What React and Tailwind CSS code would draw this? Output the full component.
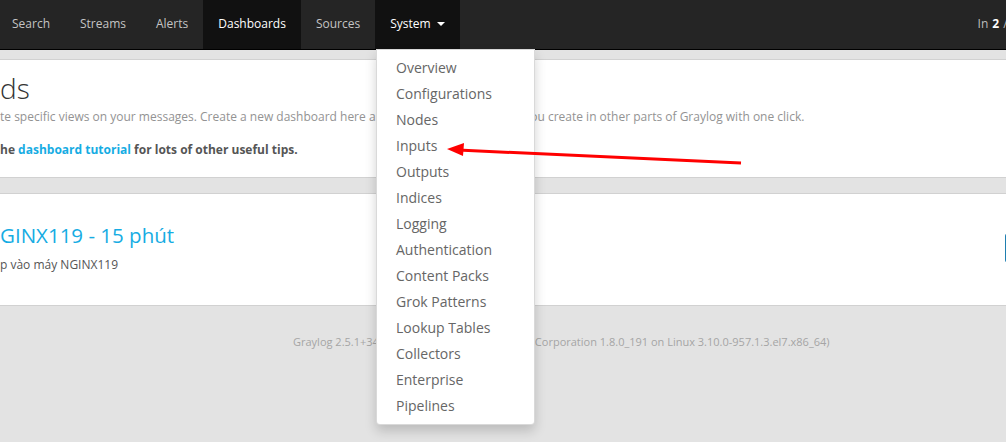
import React from "react";

const navItems = [
  { label: "Search" },
  { label: "Streams" },
  { label: "Alerts" },
  { label: "Dashboards", active: true },
  { label: "Sources" },
];

const systemMenu = [
  "Overview",
  "Configurations",
  "Nodes",
  "Inputs",
  "Outputs",
  "Indices",
  "Logging",
  "Authentication",
  "Content Packs",
  "Grok Patterns",
  "Lookup Tables",
  "Collectors",
  "Enterprise",
  "Pipelines",
];

function NavBar() {
  return (
    <nav className="h-[50px] shrink-0 bg-[#252525] border-b border-black flex items-stretch text-[12px] overflow-hidden">
      <div className="flex items-stretch ml-[-3px]">
        {navItems.map((item) => (
          <a
            key={item.label}
            className={`px-[15px] pb-[2px] flex items-center ${
              item.active ? "bg-[#111111] text-white" : "text-[#c4c4c4]"
            }`}
          >
            {item.label}
          </a>
        ))}
        <a className="px-[15px] pb-[2px] flex items-center bg-[#111111] text-white">
          System
          <span className="ml-[6px] w-0 h-0 border-x-[4px] border-x-transparent border-t-[4px] border-t-white" />
        </a>
      </div>
      <div className="ml-auto mr-[-74px] pb-[2px] shrink-0 flex items-center whitespace-nowrap text-[#bdbdbd]">
        In <b className="text-white mx-[4px]">2</b> / Out <b className="text-white mx-[4px]">2</b> msg/s
      </div>
    </nav>
  );
}

function SystemDropdown() {
  return (
    <ul className="absolute left-[376px] top-[49px] w-[159px] bg-white border border-black/15 rounded-b-[4px] shadow-[0_6px_12px_rgba(0,0,0,0.175)] pt-[5px] pb-[5px] text-[14px] text-[#666]">
      {systemMenu.map((label) => (
        <li key={label} className="px-[19px] h-[26px] leading-[26px] whitespace-nowrap">
          {label}
        </li>
      ))}
    </ul>
  );
}

function Arrow() {
  return (
    <svg className="absolute left-0 top-0 pointer-events-none" width="1006" height="442">
      <line x1="741" y1="163" x2="458" y2="150" stroke="#ff0000" strokeWidth="3" />
      <polygon points="447,149 464,143 463,156" fill="#ff0000" />
    </svg>
  );
}

export default function App() {
  return (
    <div className="relative w-[1006px] h-[442px] overflow-hidden bg-[#e3e3e3] font-['Open_Sans',sans-serif] flex flex-col">
      <NavBar />

      <div className="pt-[9px] flex flex-col gap-[15px]">
        <section className="bg-white border-y border-[#d1d1d1] h-[119px] pt-[11px] whitespace-nowrap">
          <h1 className="text-[28px] font-light text-[#333] leading-[34px]">ds</h1>
          <p className="mt-[3px] text-[12px] text-[#939393] leading-[18px]">
            te specific views on your messages. Create a new dashboard here and add any graph or chart you
            create in other parts of Graylog with one click.
          </p>
          <p className="mt-[15px] text-[12px] font-bold text-[#555] leading-[18px]">
            he <a className="text-[#16ace3]">dashboard tutorial</a> for lots of other useful tips.
          </p>
        </section>

        <section className="bg-white border-y border-[#d1d1d1] h-[113px] flex items-center whitespace-nowrap">
          <div className="flex-1 pb-[5px]">
            <h2 className="text-[20.5px] text-[#16ace3] leading-[28px]">GINX119 - 15 phút</h2>
            <p className="mt-[7px] text-[12px] text-[#555] leading-[18px]">p vào máy NGINX119</p>
          </div>
          <div className="shrink-0 w-[60px] h-[30px] mr-[-59px] mt-[-3px] bg-[#2c95cc] border border-[#1f7fb0] rounded-[3px]" />
        </section>

        <footer className="pt-[13px] text-[11px] text-[#a5a5a5] pl-[293px] whitespace-nowrap">
          Graylog 2.5.1+34a7b2c on graylog.local (Oracle Corporation 1.8.0_191 on Linux 3.10.0-957.1.3.el7.x86_64)
        </footer>
      </div>

      <SystemDropdown />
      <Arrow />
    </div>
  );
}
